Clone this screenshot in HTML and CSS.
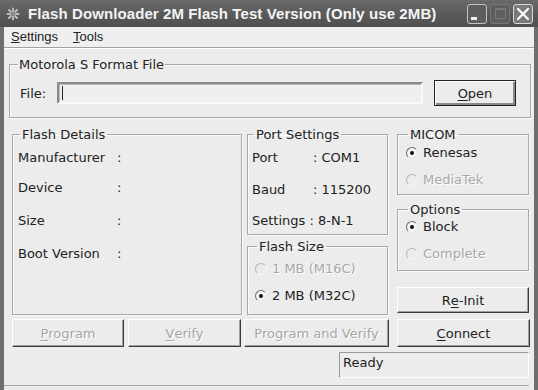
FILE: index.html
```html
<!DOCTYPE html>
<html lang="en">
<head>
    <meta charset="UTF-8">
    <meta name="viewport" content="width=device-width, initial-scale=1.0">
    <title>Flash Downloader</title>
    <link rel="stylesheet" href="styles.css">
</head>
<body>
<div class="window">
    <div class="titlebar">
        <svg class="appicon" width="14" height="14" viewBox="0 0 14 14">
            <g stroke="#bdbdbd" stroke-width="2" stroke-linecap="round">
                <line x1="7" y1="1.5" x2="7" y2="12.5"/>
                <line x1="1.5" y1="7" x2="12.5" y2="7"/>
                <line x1="3" y1="3" x2="11" y2="11"/>
                <line x1="11" y1="3" x2="3" y2="11"/>
            </g>
            <circle cx="7" cy="7" r="2.5" fill="#8a8a8a"/>
        </svg>
        <span class="title">Flash Downloader 2M Flash Test Version (Only use 2MB)</span>
        <div class="captionBtns">
            <span class="cbtn min"><i></i></span>
            <span class="cbtn max"><i></i></span>
            <span class="cbtn close">
                <svg width="14" height="14" viewBox="0 0 14 14">
                    <path d="M2 2 L12 12 M12 2 L2 12" stroke="#fff" stroke-width="2.2" stroke-linecap="round"/>
                </svg>
            </span>
        </div>
    </div>

    <div class="frame">
        <div class="menubar">
            <span><u>S</u>ettings</span>
            <span><u>T</u>ools</span>
        </div>

        <fieldset class="group fileGroup">
            <legend>Motorola S Format File</legend>
            <div class="fileRow">
                <span class="fileLabel">File:</span>
                <div class="textbox"><span class="caret"></span></div>
                <div class="btn default openBtn"><u>O</u>pen</div>
            </div>
        </fieldset>

        <div class="main">
            <fieldset class="group details">
                <legend>Flash Details</legend>
                <div class="detailGrid">
                    <span>Manufacturer</span><span>:</span>
                    <span>Device</span><span>:</span>
                    <span>Size</span><span>:</span>
                    <span>Boot Version</span><span>:</span>
                </div>
            </fieldset>

            <div class="col mid">
                <fieldset class="group port">
                    <legend>Port Settings</legend>
                    <div class="portGrid">
                        <span>Port</span><span>: COM1</span>
                        <span>Baud</span><span>: 115200</span>
                        <span class="wide">Settings : 8-N-1</span>
                    </div>
                </fieldset>
                <fieldset class="group flashSize">
                    <legend>Flash Size</legend>
                    <div class="radioList">
                        <div class="radioItem disabled"><span class="radio"></span>1 MB (M16C)</div>
                        <div class="radioItem"><span class="radio checked"></span>2 MB (M32C)</div>
                    </div>
                </fieldset>
            </div>

            <div class="col right">
                <fieldset class="group micom">
                    <legend>MICOM</legend>
                    <div class="radioList">
                        <div class="radioItem"><span class="radio checked"></span>Renesas</div>
                        <div class="radioItem disabled"><span class="radio"></span>MediaTek</div>
                    </div>
                </fieldset>
                <fieldset class="group options">
                    <legend>Options</legend>
                    <div class="radioList">
                        <div class="radioItem"><span class="radio checked"></span>Block</div>
                        <div class="radioItem disabled"><span class="radio"></span>Complete</div>
                    </div>
                </fieldset>
                <div class="btn reinit">R<u>e</u>-Init</div>
            </div>
        </div>

        <div class="actions">
            <div class="btn off progBtn"><u>P</u>rogram</div>
            <div class="btn off verifyBtn"><u>V</u>erify</div>
            <div class="btn off pvBtn">Program and Verify</div>
            <div class="btn connectBtn"><u>C</u>onnect</div>
        </div>

        <div class="statusbar">
            <div class="statusPane">Ready</div>
        </div>
    </div>
</div>
</body>
</html>
```

FILE: styles.css
```css
body{
    margin: 0px;
    background: #ececec;
    font-family: "DejaVu Sans", Verdana, sans-serif;
    font-size: 13px;
    color: #222;
}
u{
    text-decoration: underline;
    text-underline-offset: 2px;
}
.window{
    width: 538px;
    height: 390px;
    overflow: hidden;
    background: #ececec;
}

/* title bar */
.titlebar{
    height: 27px;
    background: linear-gradient(#6a6a6a, #585858 60%, #505050);
    display: flex;
    align-items: center;
    color: #f4f4f4;
}
.appicon{
    margin-left: 6px;
    margin-right: 8px;
}
.title{
    font-family: "Liberation Sans", Arial, sans-serif;
    font-weight: bold;
    font-size: 15px;
    letter-spacing: 0.1px;
    flex: 1;
    white-space: nowrap;
}
.captionBtns{
    display: flex;
    gap: 3px;
    margin-right: 5px;
}
.cbtn{
    width: 18px;
    height: 18px;
    border: 1px solid #c4c4c4;
    border-radius: 3px;
    background: #5e5e5e;
    display: flex;
    align-items: center;
    justify-content: center;
}
.cbtn.min i{
    width: 6px;
    height: 3px;
    background: #f0f0f0;
    margin: 9px 6px 0px 0px;
}
.cbtn.max{
    border-color: #777;
}
.cbtn.max i{
    width: 9px;
    height: 8px;
    border: 1px solid #777;
    border-top-width: 2px;
}
.cbtn.close{
    background: #7a7a7a;
    border-color: #d8d8d8;
}

/* client frame */
.frame{
    height: 363px;
    border-left: 4px solid #6e6e6e;
    border-right: 4px solid #6e6e6e;
    background: #ececec;
}
.menubar{
    height: 20px;
    line-height: 20px;
    padding-left: 7px;
    font-family: "Liberation Sans", Arial, sans-serif;
    font-size: 13px;
    display: flex;
    gap: 15px;
    border-bottom: 1px solid #a0a0a0;
    box-shadow: 0px 1px 0px #fff;
    background: #efefef;
}
.menubar u{
    text-underline-offset: 1px;
}

/* group boxes */
.group{
    margin: 0px;
    padding: 0px 4px;
    border: 1px solid #a8a8a8;
    box-shadow: inset 1px 1px 0px #fbfbfb, 1px 1px 0px #fbfbfb;
    min-width: 0px;
}
.group legend{
    padding: 0px 2px;
    margin-left: 2px;
    line-height: 15px;
}
.fileGroup{
    margin: 9px 0px 0px 5px;
    width: 522px;
    box-sizing: border-box;
    padding: 8px 14px 11px 8px;
}
.fileGroup legend{
    margin-left: 0px;
    padding: 0px 1px;
}
.fileRow{
    display: flex;
    align-items: center;
    height: 26px;
}
.fileLabel{
    margin-left: 2px;
    width: 37px;
}
.textbox{
    width: 362px;
    height: 18px;
    border: 2px solid;
    border-color: #8a8a8a #fafafa #fafafa #8a8a8a;
    box-shadow: inset 1px 1px 0px #b8b8b8;
    background: #efefef;
    display: flex;
    align-items: center;
}
.caret{
    width: 1px;
    height: 14px;
    background: #222;
    margin-left: 3px;
}

/* buttons */
.btn{
    box-sizing: border-box;
    height: 26px;
    display: flex;
    align-items: center;
    justify-content: center;
    border: 1px solid;
    border-color: #fff #3c3c3c #3c3c3c #fff;
    box-shadow: inset -1px -1px 0px #a0a0a0;
    background: #ececec;
}
.btn.default{
    border: 1px solid #222;
    box-shadow: inset 1px 1px 0px #fff, inset -2px -2px 0px #8a8a8a;
}
.openBtn{
    width: 82px;
    margin-left: 11px;
}
.btn.off{
    color: #a6a6a6;
    text-shadow: 1px 1px 0px #fff;
}

/* main area */
.main{
    display: flex;
    margin: 9px 0px 0px 8px;
}
.details{
    width: 230px;
    box-sizing: border-box;
    padding: 0px 5px;
}
.detailGrid{
    display: grid;
    grid-template-columns: 99px 1fr;
    grid-template-rows: 30px 33px 33px 15px;
    line-height: 15px;
    padding-top: 8px;
}
.col{
    display: flex;
    flex-direction: column;
}
.mid{
    width: 141px;
    margin-left: 5px;
}
.right{
    width: 132px;
    margin-left: 9px;
}
.port{
    padding: 8px 4px 6px 4px;
}
.portGrid{
    display: grid;
    grid-template-columns: 61px 1fr;
    grid-template-rows: 32px 31px 15px;
    line-height: 15px;
}
.portGrid .wide{
    grid-column: 1 / 3;
}
.flashSize{
    margin-top: 4px;
    padding: 7px 4px 11px 7px;
}
.micom{
    padding: 3px 4px 7px 8px;
}
.options{
    margin-top: 7px;
    padding: 2px 4px 9px 8px;
}
.reinit{
    margin-top: 16px;
    width: 132px;
}

/* radio buttons */
.radioList{
    display: flex;
    flex-direction: column;
    gap: 12px;
}
.radioItem{
    display: flex;
    align-items: center;
    height: 15px;
    line-height: 15px;
}
.radio{
    width: 10px;
    height: 10px;
    border-radius: 50%;
    border: 1px solid;
    border-color: #6a6a6a #e8e8e8 #e8e8e8 #6a6a6a;
    background: #f4f4f4;
    margin-right: 5px;
    display: flex;
    align-items: center;
    justify-content: center;
}
.radio.checked::after{
    content: "";
    width: 4px;
    height: 4px;
    border-radius: 50%;
    background: #111;
}
.radioItem.disabled{
    color: #a8a8a8;
    text-shadow: 1px 1px 0px #fff;
}
.radioItem.disabled .radio{
    border-color: #b4b4b4 #f4f4f4 #f4f4f4 #b4b4b4;
    background: #ececec;
}

/* bottom buttons */
.actions{
    display: flex;
    margin: 4px 0px 0px 8px;
}
.actions .btn{
    height: 28px;
}
.progBtn{
    width: 112px;
}
.verifyBtn{
    width: 113px;
    margin-left: 4px;
}
.pvBtn{
    width: 145px;
    margin-left: 3px;
}
.connectBtn{
    width: 133px;
    margin-left: 8px;
}

/* status bar */
.statusbar{
    display: flex;
    justify-content: flex-end;
    margin: 5px 5px 0px 0px;
    padding-bottom: 7px;
    border-bottom: 1px solid #a8a8a8;
}
.statusPane{
    width: 190px;
    height: 26px;
    box-sizing: border-box;
    border: 1px solid;
    border-color: #9a9a9a #fff #fff #9a9a9a;
    padding: 2px 3px;
    line-height: 15px;
}
```
